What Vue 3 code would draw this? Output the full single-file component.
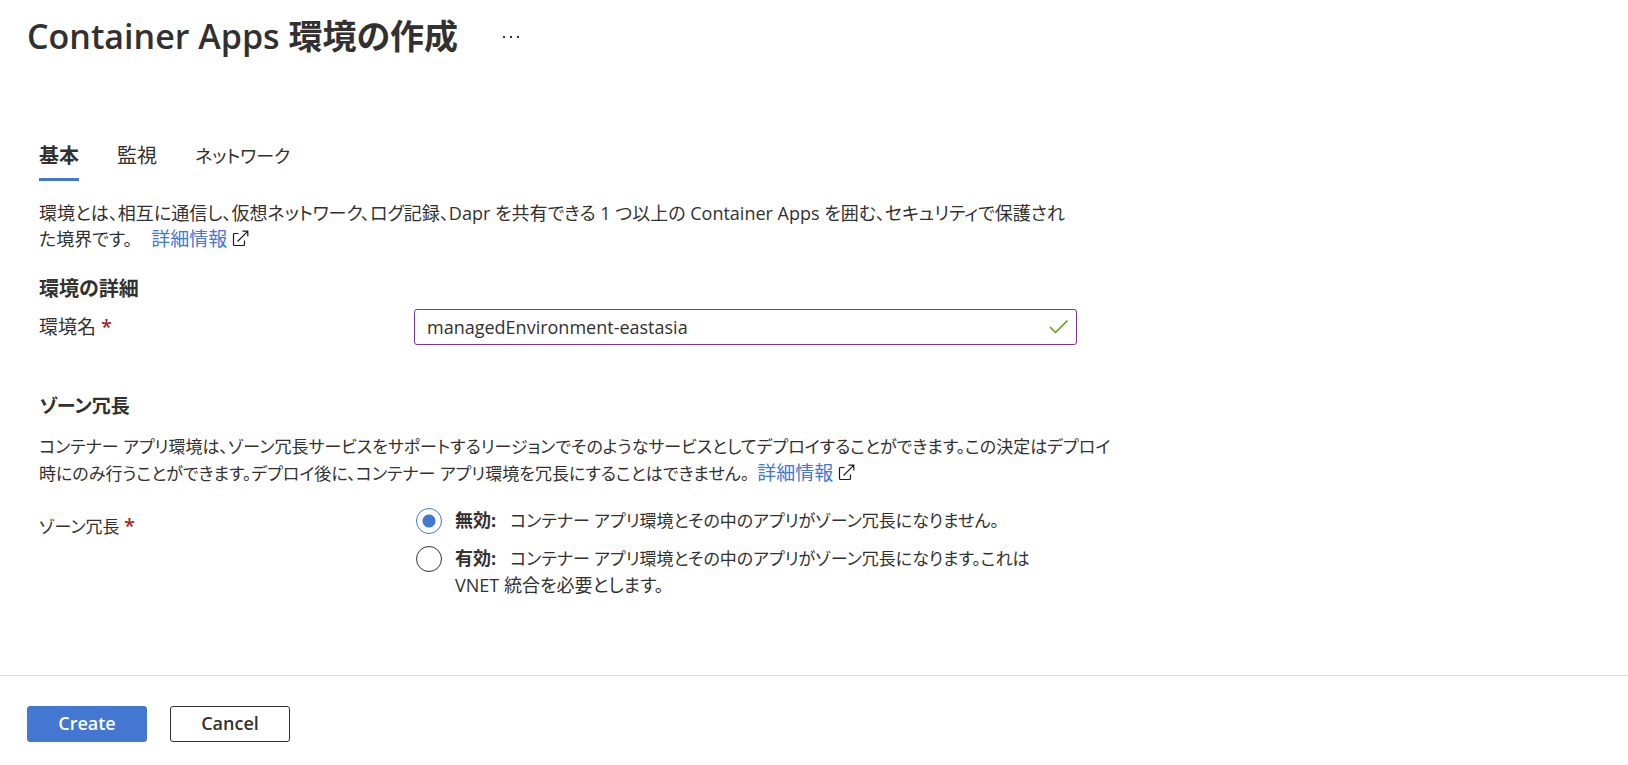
<script setup>
import { ref } from 'vue'

const tabs = [
  { name: '基本' },
  { name: '監視' },
  { name: 'ネットワーク', kana: true },
]
const activeTab = ref('基本')
const envName = ref('managedEnvironment-eastasia')
const redundancy = ref('off')
</script>

<template>
  <div class="page">
    <header class="header">
      <h1>Container Apps 環境の作成</h1>
      <button class="more" type="button" aria-label="その他">
        <svg width="18" height="4" viewBox="0 0 18 4" fill="#323130">
          <rect x="1" y="1" width="2" height="2" /><rect x="8" y="1" width="2" height="2" /><rect x="15" y="1" width="2" height="2" />
        </svg>
      </button>
    </header>

    <main class="content">
      <nav class="tabs" role="tablist">
        <button
          v-for="tab in tabs"
          :key="tab.name"
          type="button"
          role="tab"
          class="tab"
          :class="{ active: tab.name === activeTab, kana: tab.kana }"
          :aria-selected="tab.name === activeTab"
          @click="activeTab = tab.name"
        >{{ tab.name }}</button>
      </nav>

      <p class="text intro">
        環境とは、相互に通信し、仮想ネットワーク、ログ記録、Dapr を共有できる 1 つ以上の Container Apps を囲む、セキュリティで保護され<br>た境界です。<a class="link first" href="#">詳細情報</a><svg class="ext" width="17" height="17" viewBox="0 0 17 17" fill="none" stroke="#1b1a19"><path d="M6.500 3.500H2.500a1 1 0 0 0-1 1v10a1 1 0 0 0 1 1h9a1 1 0 0 0 1-1V10.500M5.500 11.500L15.700 1.300M10.500 1.200H15.800V6.500" stroke-width="1.200" /></svg>
      </p>

      <h2>環境の詳細</h2>
      <div class="row name-row">
        <label class="label" for="env">環境名 <span class="req">*</span></label>
        <div class="field">
          <input id="env" v-model="envName" class="input" type="text">
          <svg class="check" width="20" height="16" viewBox="0 0 20 16" fill="none" stroke="#57a300" stroke-width="1.500"><path d="M1 8L6.500 13.500L18.500 1.500" /></svg>
        </div>
      </div>

      <h2 class="zone kana">ゾーン冗長</h2>
      <p class="text dense">
        コンテナー アプリ環境は、ゾーン冗長サービスをサポートするリージョンでそのようなサービスとしてデプロイすることができます。この決定はデプロイ<br>時にのみ行うことができます。デプロイ後に、コンテナー アプリ環境を冗長にすることはできません。<a class="link" href="#">詳細情報</a><svg class="ext" width="17" height="17" viewBox="0 0 17 17" fill="none" stroke="#1b1a19"><path d="M6.500 3.500H2.500a1 1 0 0 0-1 1v10a1 1 0 0 0 1 1h9a1 1 0 0 0 1-1V10.500M5.500 11.500L15.700 1.300M10.500 1.200H15.800V6.500" stroke-width="1.200" /></svg>
      </p>

      <div class="row" role="radiogroup" aria-labelledby="zone-label">
        <span id="zone-label" class="label zone-label">ゾーン冗長 <span class="req">*</span></span>
        <div class="radios">
          <label class="option">
            <input v-model="redundancy" type="radio" name="zone" value="off">
            <span><b>無効:</b>コンテナー アプリ環境とその中のアプリがゾーン冗長になりません。</span>
          </label>
          <label class="option">
            <input v-model="redundancy" type="radio" name="zone" value="on">
            <span><b>有効:</b>コンテナー アプリ環境とその中のアプリがゾーン冗長になります。これは<br><span class="latin">VNET 統合を必要とします。</span></span>
          </label>
        </div>
      </div>
    </main>

    <footer class="footer">
      <button class="btn primary" type="button">Create</button>
      <button class="btn" type="button">Cancel</button>
    </footer>
  </div>
</template>

<style>
body {
  background: #fff;
}
</style>

<style scoped>
.page {
  display: flex;
  flex-direction: column;
  min-height: 100vh;
  color: #323130;
  font-family: "Open Sans", "Noto Sans CJK JP", sans-serif;
  font-size: 18px;
  line-height: 26px;
  font-feature-settings: "palt";
}
button,
input {
  font: inherit;
  color: inherit;
  font-feature-settings: inherit;
}
.header {
  display: flex;
  align-items: center;
  gap: 44px;
  height: 72px;
  padding-left: 27px;
}
h1 {
  margin: 0;
  font-size: 34px;
  font-weight: 600;
  line-height: 44px;
}
.more {
  display: flex;
  padding: 6px 0 4px;
  border: 0;
  background: none;
}
.content {
  flex: 1;
  padding: 66px 40px 0 39px;
}
.tabs {
  display: flex;
  gap: 38px;
}
.tab {
  padding: 5px 0 9px;
  border: 0;
  border-bottom: 3px solid transparent;
  background: none;
  font-size: 20px;
}
.tab.active {
  border-color: #4377d2;
  font-weight: 700;
}
.tab.kana {
  font-size: 18px;
}
.text {
  margin: 0;
  white-space: nowrap;
}
.dense {
  font-size: 17px;
}
.intro {
  margin-top: 19px;
}
.link {
  margin: 0 5px 0 8px;
  color: #4377d2;
  font-size: 19px;
  text-decoration: none;
}
.link.first {
  margin-left: 19px;
}
.ext {
  vertical-align: -1px;
}
h2 {
  margin: 24px 0 0;
  font-size: 20px;
  font-weight: 700;
  line-height: 26px;
}
h2.kana {
  font-size: 19px;
}
.row {
  display: flex;
}
.name-row {
  margin-top: 7px;
}
.label {
  flex: 0 0 375px;
  line-height: 36px;
  font-size: 19px;
}
.req {
  color: #a4262c;
  font-size: 20px;
  font-weight: 600;
}
.field {
  display: flex;
  position: relative;
  flex: 0 1 663px;
}
.input {
  box-sizing: border-box;
  width: 100%;
  height: 36px;
  padding: 0 40px 0 12px;
  border: 1px solid #8230a8;
  border-radius: 3px;
  outline: 0;
  background: #fff;
}
.check {
  position: absolute;
  right: 8px;
  top: 10px;
}
h2.zone {
  margin: 48px 0 15px;
}
.zone-label {
  margin-top: 21px;
  font-size: 17px;
}
.radios {
  display: flex;
  flex-direction: column;
  gap: 11px;
  padding: 20px 0 0 2px;
}
.option {
  display: flex;
  gap: 13px;
  font-size: 17px;
  line-height: 27px;
  white-space: nowrap;
}
.option b {
  margin-right: 14px;
  font-size: 18px;
}
.option .latin {
  font-size: 18px;
}
.option input {
  flex: none;
  appearance: none;
  width: 26px;
  height: 26px;
  margin: 1px 0 0;
  border: 1px solid #323130;
  border-radius: 50%;
}
.option input:checked {
  border-color: #4377d2;
  background: radial-gradient(circle, #4377d2 6px, transparent 7px);
}
.footer {
  display: flex;
  gap: 23px;
  padding: 30px 27px 23px;
  border-top: 1px solid #dcdcdc;
}
.btn {
  box-sizing: border-box;
  width: 120px;
  height: 36px;
  padding: 0 0 2px;
  border: 1px solid #323130;
  border-radius: 3px;
  background: #fff;
  font-weight: 600;
}
.btn.primary {
  border-color: #4377d2;
  background: #4377d2;
  color: #fff;
}
</style>
